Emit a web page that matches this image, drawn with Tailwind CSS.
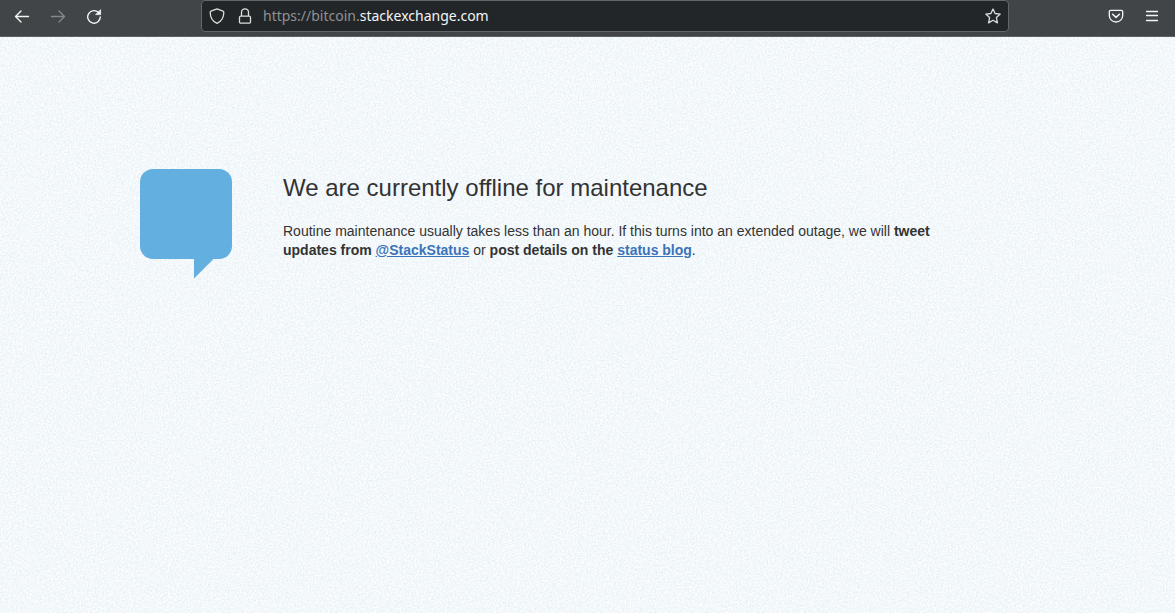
<!DOCTYPE html>
<html lang="en">
<head>
<meta charset="utf-8">
<meta name="viewport" content="width=device-width, initial-scale=1">
<title>Offline for maintenance</title>
<script src="https://cdn.jsdelivr.net/npm/@tailwindcss/browser@4"></script>
</head>
<body class="flex min-h-screen flex-col bg-[#f4f9fc] font-['Liberation_Sans',Arial,sans-serif] text-[#333333]">
<header class="flex h-[37px] items-start border-b border-[#5c6064] bg-[#414548] pr-[5px] pl-1 font-['Noto_Sans',sans-serif] text-[#f4f5f5]">
  <nav class="flex" aria-label="History">
    <button class="flex h-8 w-9 items-center justify-center" aria-label="Back">
      <svg class="size-4" viewBox="0 0 16 16" fill="none" stroke="currentColor" stroke-width="1.4" stroke-linecap="round" stroke-linejoin="round"><path d="M14.5 8.500H1.500M7 3L1.500 8.500L7 14"/></svg>
    </button>
    <button class="flex h-8 w-9 items-center justify-center text-[#85888a]" aria-label="Forward" disabled>
      <svg class="size-4" viewBox="0 0 16 16" fill="none" stroke="currentColor" stroke-width="1.4" stroke-linecap="round" stroke-linejoin="round"><path d="M1.500 8.500H14.500M9 3L14.500 8.500L9 14"/></svg>
    </button>
    <button class="flex h-8 w-9 items-center justify-center" aria-label="Reload">
      <svg class="size-4" viewBox="0 0 16 16" fill="none" stroke="currentColor" stroke-width="1.4" stroke-linecap="round"><path d="M12.700 4.700A6.300 6.300 0 1 0 14.300 9"/><path d="M14.600 2V6.600H10Z" fill="currentColor" stroke-width=".8" stroke-linejoin="round"/></svg>
    </button>
  </nav>
  <div class="mx-[89px] flex h-8 min-w-0 flex-1 items-center rounded border border-[#63686b] bg-[#222629] px-[7px]">
    <button class="text-[#dcdddd]" aria-label="Tracking protection">
      <svg class="size-4" viewBox="0 0 16 16" fill="none" stroke="currentColor" stroke-width="1.3" stroke-linejoin="round"><path d="M8 .9L14 3.100Q14.800 3.400 14.800 4.200C14.800 9.500 12.400 13.400 8 15.300C3.600 13.400 1.200 9.500 1.200 4.200Q1.200 3.400 2 3.100Z"/></svg>
    </button>
    <button class="ml-3 text-[#dcdddd]" aria-label="Connection secure">
      <svg class="size-4" viewBox="0 0 16 16" fill="none" stroke="currentColor" stroke-width="1.3"><rect x="2.500" y="8.200" width="11" height="7" rx="1.300"/><path d="M4.500 8V4.300A3.500 3.500 0 0 1 11.500 4.300V8"/></svg>
    </button>
    <label for="url" class="ml-[10px] text-sm text-[#8f9294]">https://bitcoin.</label>
    <input id="url" type="text" value="stackexchange.com" class="min-w-0 flex-1 bg-transparent text-sm text-[#f4f5f5] outline-none">
    <button class="text-[#dcdddd]" aria-label="Bookmark this page">
      <svg class="size-4" viewBox="0 0 16 16" fill="none" stroke="currentColor" stroke-width="1.3" stroke-linejoin="round"><path d="M8 1L10.100 5.500L15.200 6.100L11.400 9.600L12.400 14.900L8 12.300L3.600 14.900L4.600 9.600L.8 6.100L5.900 5.500Z"/></svg>
    </button>
  </div>
  <div class="flex">
    <button class="flex h-8 w-9 items-center justify-center" aria-label="Save to Pocket">
      <svg class="size-4" viewBox="0 0 16 16" fill="none" stroke="currentColor" stroke-width="1.3" stroke-linecap="round" stroke-linejoin="round"><path d="M2.500 2.400H13.500Q14.700 2.400 14.700 3.600V7.500A6.700 6.500 0 0 1 1.300 7.500V3.600Q1.300 2.400 2.500 2.400Z"/><path d="M4.600 6.300L8 9.400L11.400 6.300" stroke-width="1.500"/></svg>
    </button>
    <button class="flex h-8 w-9 items-center justify-center" aria-label="Menu">
      <svg class="size-4" viewBox="0 0 16 16" fill="none" stroke="currentColor" stroke-width="1.300" stroke-linecap="round"><path d="M2.500 3.500H13.500M2.500 7.500H13.500M2.500 12.500H13.500"/></svg>
    </button>
  </div>
</header>
<main class="relative flex-1">
  <svg class="absolute inset-0 h-full w-full" aria-hidden="true">
    <filter id="grain" x="0" y="0" width="100%" height="100%" color-interpolation-filters="sRGB">
      <feTurbulence type="fractalNoise" baseFrequency=".6" numOctaves="4" seed="4"/>
      <feColorMatrix values=".17 0 0 0 .867  .1 0 0 0 .922  .08 0 0 0 .943  0 0 0 0 1"/>
    </filter>
    <rect width="100%" height="100%" filter="url(#grain)"/>
  </svg>
  <div class="relative mx-auto flex max-w-[895px] items-start pt-[132px]">
    <svg class="h-[110px] w-[92px] shrink-0" viewBox="0 0 92 110" fill="#62afe0" role="img" aria-label="Stack Exchange"><path d="M13 0H79A13 13 0 0 1 92 13V77A13 13 0 0 1 79 90H73.500L54 109.500V90H13A13 13 0 0 1 0 77V13A13 13 0 0 1 13 0Z"/></svg>
    <div class="ml-[51px] max-w-[660px] pt-1">
      <h1 class="text-2xl leading-[30px]">We are currently offline for maintenance</h1>
      <p class="mt-[19px] text-sm leading-[19px]">Routine maintenance usually takes less than an hour. If this turns into an extended outage, we will <b>tweet updates from <a href="#" class="text-[#3b73b9] underline">@StackStatus</a></b> or <b>post details on the <a href="#" class="text-[#3b73b9] underline">status blog</a></b>.</p>
    </div>
  </div>
</main>
</body>
</html>
